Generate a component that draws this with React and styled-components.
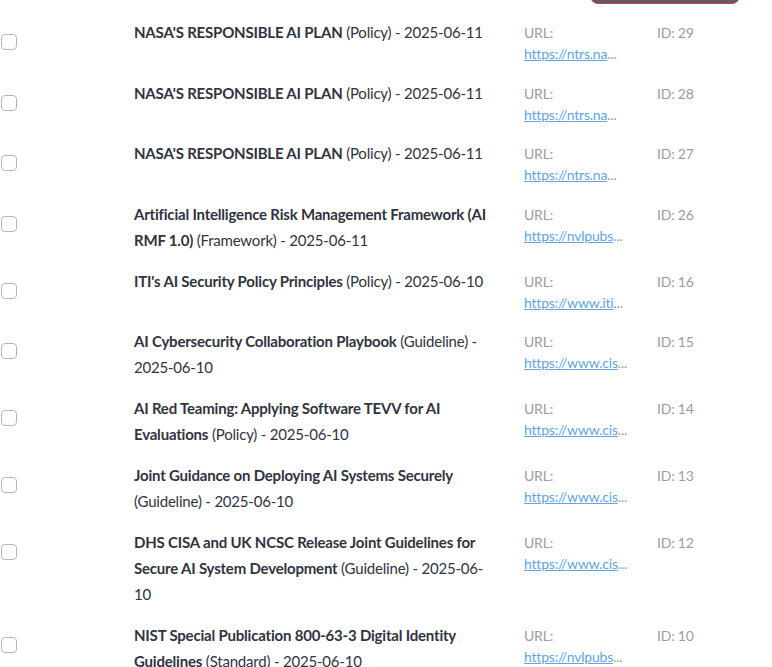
import React from "react";
import styled, { createGlobalStyle } from "styled-components";

const docs = [
  { id: 29, title: "NASA'S RESPONSIBLE AI PLAN", kind: "Policy", date: "2025-06-11", url: "https://ntrs.na" },
  { id: 28, title: "NASA'S RESPONSIBLE AI PLAN", kind: "Policy", date: "2025-06-11", url: "https://ntrs.na" },
  { id: 27, title: "NASA'S RESPONSIBLE AI PLAN", kind: "Policy", date: "2025-06-11", url: "https://ntrs.na" },
  { id: 26, title: "Artificial Intelligence Risk Management Framework (AI RMF 1.0)", kind: "Framework", date: "2025-06-11", url: "https://nvlpubs" },
  { id: 16, title: "ITI's AI Security Policy Principles", kind: "Policy", date: "2025-06-10", url: "https://www.iti" },
  { id: 15, title: "AI Cybersecurity Collaboration Playbook", kind: "Guideline", date: "2025-06-10", url: "https://www.cis" },
  { id: 14, title: "AI Red Teaming: Applying Software TEVV for AI Evaluations", kind: "Policy", date: "2025-06-10", url: "https://www.cis" },
  { id: 13, title: "Joint Guidance on Deploying AI Systems Securely", kind: "Guideline", date: "2025-06-10", url: "https://www.cis" },
  { id: 12, title: "DHS CISA and UK NCSC Release Joint Guidelines for Secure AI System Development", kind: "Guideline", date: "2025-06-10", url: "https://www.cis" },
  { id: 10, title: "NIST Special Publication 800-63-3 Digital Identity Guidelines", kind: "Standard", date: "2025-06-10", url: "https://nvlpubs" },
];

function App() {
  return (
    <>
      <GlobalStyle />
      <Page>
        <TopBar>
          <DeleteButton aria-label="Delete selected" />
        </TopBar>
        <List>
          {docs.map((doc) => (
            <Row key={doc.id}>
              <CheckCell>
                <Check type="checkbox" />
              </CheckCell>
              <Title>
                <strong>{doc.title}</strong> ({doc.kind}) - {doc.date}
              </Title>
              <Meta>
                <Label>URL:</Label>
                <div>
                  <Link href="#">{doc.url}</Link>
                  <Dots>...</Dots>
                </div>
              </Meta>
              <Meta>
                <Label>ID: {doc.id}</Label>
              </Meta>
            </Row>
          ))}
        </List>
      </Page>
    </>
  );
}

export default App;

const GlobalStyle = createGlobalStyle`
  body {
    margin: 0;
    background: #fff;
    font-family: "Lato", "Noto Sans", sans-serif;
    color: #31333f;
    overflow: hidden;
  }
`;

const Page = styled.div`
  width: 772px;
`;

const TopBar = styled.div`
  display: flex;
  justify-content: flex-end;
  padding-right: 32px;
  height: 4px;
`;

const DeleteButton = styled.button`
  width: 150px;
  height: 40px;
  margin-top: -36px;
  background: #595c6b;
  border: 1px solid #d33a4a;
  border-radius: 8px;
`;

const List = styled.div`
  padding-top: 15px;
`;

const Row = styled.div`
  display: grid;
  grid-template-columns: 118px 374px 117px 1fr;
  column-gap: 16px;
  align-items: start;
  margin-bottom: 15px;
`;

const CheckCell = styled.div`
  padding-top: 15px;
`;

const Check = styled.input`
  appearance: none;
  display: block;
  margin: 0 0 0 1px;
  width: 16px;
  height: 16px;
  border: 1px solid #b5b6bc;
  border-radius: 4px;
  background: #fff;
`;

const Title = styled.div`
  padding-right: 14px;
  font-size: 15px;
  letter-spacing: -0.2px;
  line-height: 26px;
  color: #31333f;

  strong {
    font-weight: 700;
  }
`;

const Meta = styled.div`
  font-size: 14px;
  letter-spacing: -0.2px;
  line-height: 21px;
  padding: 3px 0 0.5px;
  white-space: nowrap;
`;

const Label = styled.div`
  color: #9a9ca6;
`;

const Link = styled.a`
  color: #62a4e4;
  text-decoration: underline;
`;

const Dots = styled.span`
  color: #9a9ca6;
`;
